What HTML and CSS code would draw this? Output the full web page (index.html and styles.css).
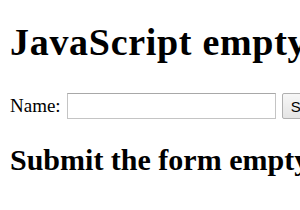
FILE: index.html
```html
<!DOCTYPE html>
<html lang="en">
<head>
    <meta charset="UTF-8">
    <title>JavaScript empty form validation</title>
    <link rel="stylesheet" href="styles.css">
</head>
<body>
    <h1>JavaScript empty form validation</h1>
    <form class="name-form">
        <label for="name">Name:</label>
        <input type="text" id="name" class="name-input">
        <button type="submit" class="submit-btn">Submit</button>
    </form>
    <h2>Submit the form empty to see the validation</h2>
</body>
</html>
```

FILE: styles.css
```css
html, body {
    overflow: hidden;
}
body {
    font-family: "Liberation Serif", serif;
    font-size: 19px;
    margin: 8px 0 0 10px;
    white-space: nowrap;
    color: #000;
    background: #fff;
}
h1 {
    font-size: 38px;
    letter-spacing: 0.7px;
    line-height: normal;
    margin: 12px 0 29px;
}
.name-form {
    display: flex;
    align-items: center;
    gap: 6px;
}
.name-form > * {
    flex-shrink: 0;
}
.name-input {
    box-sizing: border-box;
    width: 209px;
    height: 26px;
    border: 1px solid #c4c4c4;
    border-top-color: #a8a8a8;
    padding: 1px 3px;
    font-family: inherit;
}
.submit-btn {
    box-sizing: border-box;
    font-family: "Liberation Sans", sans-serif;
    font-size: 15px;
    height: 26px;
    padding: 0 8px;
    border: 1px solid #b0b0b0;
    border-radius: 2px;
    background: linear-gradient(#f7f7f7, #e4e4e4);
    color: #000;
}
h2 {
    font-size: 30px;
    line-height: normal;
    margin: 24px 0;
}
```
